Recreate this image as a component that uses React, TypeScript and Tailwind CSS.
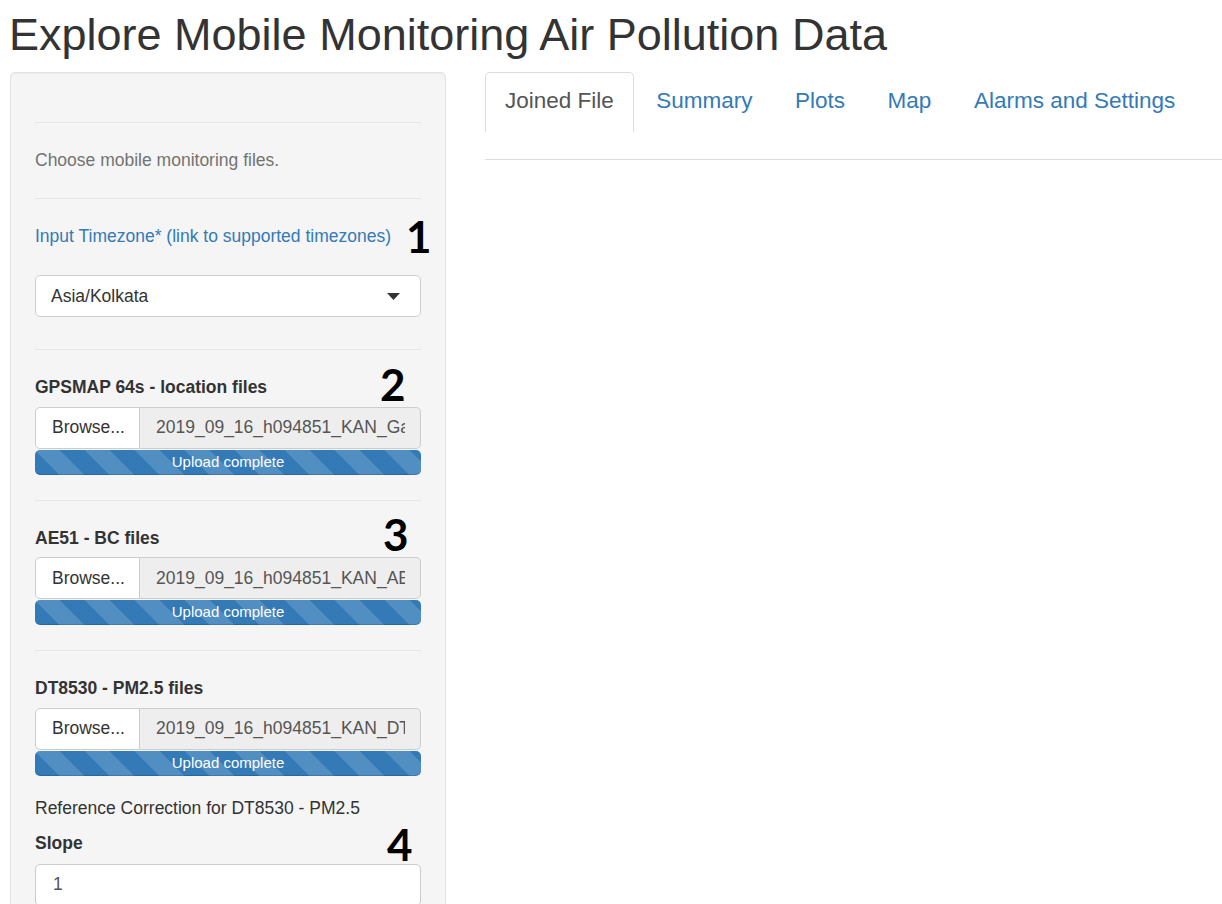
import React from "react";

const stripes =
  "bg-[#337ab7] bg-[linear-gradient(45deg,rgba(255,255,255,0.15)_25%,transparent_25%,transparent_50%,rgba(255,255,255,0.15)_50%,rgba(255,255,255,0.15)_75%,transparent_75%,transparent)] bg-size-[50px_50px]";

function FileSection({ label, file, last }: { label: string; file: string; last?: boolean }) {
  return (
    <div>
      <div className="mt-[25px] text-[17.5px] font-bold leading-[25px] text-[#333]">{label}</div>
      <div className="mt-[6.5px] flex h-[42px] text-[17.5px] leading-[25px]">
        <div className="flex w-[105px] shrink-0 items-center rounded-l-[5px] border border-[#ccc] bg-white pl-[16px] text-[#333]">
          Browse...
        </div>
        <div className="flex min-w-0 flex-1 items-center overflow-hidden rounded-r-[5px] border border-l-0 border-[#ccc] bg-[#eee] pl-[16px] pr-[15px] text-[#555]">
          <span className="block overflow-hidden whitespace-nowrap">{file}</span>
        </div>
      </div>
      <div
        className={`mt-[1px] flex h-[25px] items-center justify-center rounded-[5px] text-[15px] text-white shadow-[inset_0_-1px_0_rgba(0,0,0,0.15)] ${stripes}`}
      >
        Upload complete
      </div>
      {!last && <hr className="mt-[25px] border-t border-[#e6e6e6]" />}
    </div>
  );
}

function Num({ n, left, top }: { n: string; left: number; top: number }) {
  return (
    <div
      className="absolute text-[44px] font-bold leading-none text-black"
      style={{ left, top, fontFamily: "Lato, 'Open Sans', sans-serif" }}
    >
      {n}
    </div>
  );
}

export default function App() {
  return (
    <div
      className="h-[904px] overflow-hidden bg-white pl-[10px] text-[#333]"
      style={{ fontFamily: "'Liberation Sans', Arial, sans-serif" }}
    >
      <h1 className="ml-[-1px] mt-[10px] mb-[12.5px] text-[45px] font-normal leading-[49.5px] text-[#333]">
        Explore Mobile Monitoring Air Pollution Data
      </h1>
      <div className="grid grid-cols-[436px_1fr] gap-[39px]">
        <div className="relative rounded-[5px] border border-[#e3e3e3] bg-[#f5f5f5] px-[24px] pb-[80px] pt-[24px] shadow-[inset_0_1px_1px_rgba(0,0,0,0.05)]">
          <hr className="mt-[25px] border-t border-[#e6e6e6]" />
          <div className="mt-[25px] text-[17.5px] leading-[25px] text-[#737373]">Choose mobile monitoring files.</div>
          <hr className="mt-[25px] border-t border-[#e6e6e6]" />
          <div className="mt-[25px] text-[17.5px] leading-[25px] text-[#337ab7]">
            Input Timezone* (link to supported timezones)
          </div>
          <div className="mt-[26px] flex h-[42px] items-center justify-between rounded-[5px] border border-[#ccc] bg-white pl-[15px] pr-[20px] text-[17.5px] text-[#333]">
            <span>Asia/Kolkata</span>
            <svg width="13" height="7" viewBox="0 0 13 7">
              <path d="M0 0 L13 0 L6.5 7 Z" fill="#333" />
            </svg>
          </div>
          <hr className="mt-[32px] border-t border-[#e6e6e6]" />
          <FileSection label="GPSMAP 64s - location files" file="2019_09_16_h094851_KAN_Garmin.gpx" />
          <FileSection label="AE51 - BC files" file="2019_09_16_h094851_KAN_AE51.csv" />
          <FileSection label="DT8530 - PM2.5 files" file="2019_09_16_h094851_KAN_DT8530.csv" last />
          <div className="mt-[20px] text-[17.5px] leading-[25px] text-[#333]">Reference Correction for DT8530 - PM2.5</div>
          <div className="mt-[10px] text-[17.5px] font-bold leading-[25px] text-[#333]">Slope</div>
          <div className="mt-[8px] flex h-[42px] items-center rounded-[5px] border border-[#ccc] bg-white pl-[17px] text-[17.5px] text-[#555]">
            1
          </div>
          <Num n="1" left={395} top={141} />
          <Num n="2" left={369} top={289} />
          <Num n="3" left={372} top={439} />
          <Num n="4" left={376} top={749} />
        </div>
        <div>
          <div className="flex h-[60px] items-stretch text-[22.5px]">
            <div className="mr-[2.5px] flex items-center rounded-t-[5px] border border-b-0 border-[#ddd] bg-white px-[19px] pb-[3px] text-[#555]">
              Joined File
            </div>
            <div className="mr-[2.5px] flex items-center px-[20px] pb-[3px] text-[#337ab7]">Summary</div>
            <div className="mr-[2.5px] flex items-center px-[20px] pb-[3px] text-[#337ab7]">Plots</div>
            <div className="mr-[2.5px] flex items-center px-[20px] pb-[3px] text-[#337ab7]">Map</div>
            <div className="mr-[2.5px] flex items-center px-[20px] pb-[3px] text-[#337ab7]">Alarms and Settings</div>
          </div>
          <div className="mt-[27px] border-t border-[#ddd]" />
        </div>
      </div>
    </div>
  );
}
